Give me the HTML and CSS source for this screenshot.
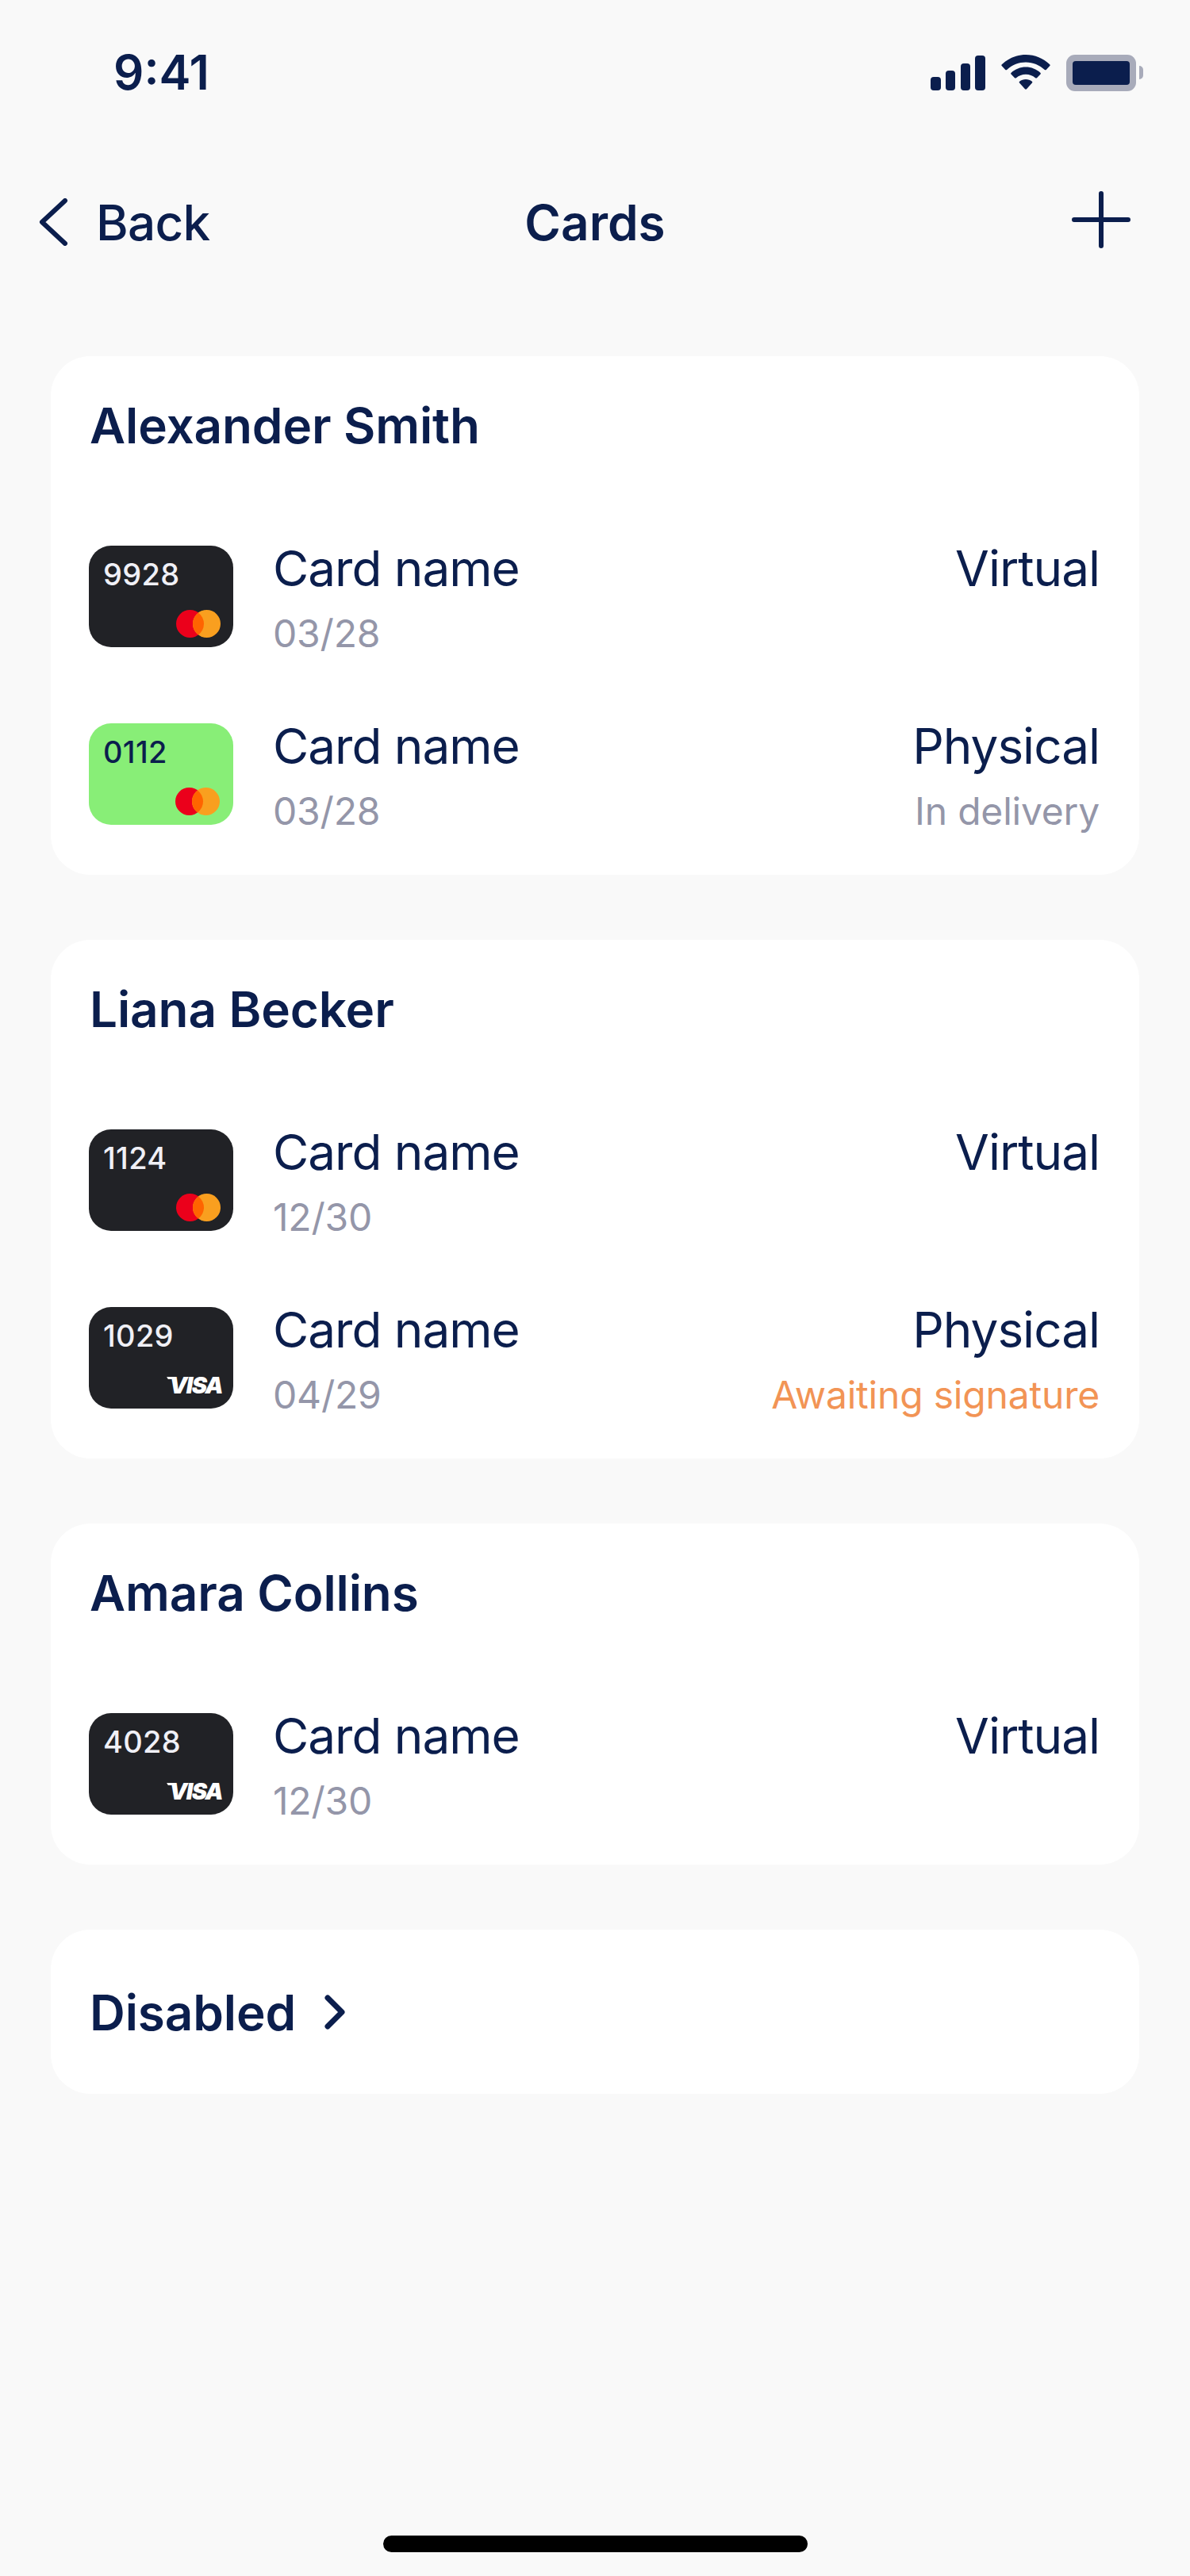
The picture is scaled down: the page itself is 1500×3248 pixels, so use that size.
FILE: index.html
```html
<!DOCTYPE html>
<html>

<head>
    <title>Cards</title>
    <link rel="stylesheet" href="styles.css">
</head>

<body>

    <div class="page">
        <div class="status-bar">
            <span class="time">9:41</span>
            <div class="status-icons">
                <svg class="icon-signal" width="69" height="44" viewBox="0 0 69 44">
                    <rect x="0" y="27" width="13" height="17" rx="4" />
                    <rect x="19" y="19" width="12" height="25" rx="4" />
                    <rect x="38" y="10" width="12" height="34" rx="4" />
                    <rect x="56" y="0" width="13" height="44" rx="4" />
                </svg>
                <svg class="icon-wifi" width="62" height="44" viewBox="0 0 62 44">
                    <path d="M31 0C19.500 0 9 4.600 0.800 12.200C0.200 12.800 0.200 13.600 0.700 14.100L5.300 18.900C5.800 19.400 6.600 19.400 7.200 18.900C13.500 13 21.800 9.400 31 9.400C40.200 9.400 48.500 13 54.800 18.900C55.400 19.400 56.200 19.400 56.700 18.900L61.300 14.100C61.800 13.600 61.800 12.800 61.200 12.200C53 4.600 42.500 0 31 0Z" />
                    <path d="M31 15.500C24 15.500 17.600 18.200 12.600 22.700C12 23.200 12 24 12.500 24.500L17 29.200C17.500 29.700 18.300 29.700 18.900 29.200C22.200 26.400 26.400 24.800 31 24.800C35.600 24.800 39.800 26.400 43.100 29.200C43.700 29.700 44.500 29.700 45 29.200L49.500 24.500C50 24 50 23.200 49.400 22.700C44.400 18.200 38 15.500 31 15.500Z" />
                    <path d="M31 31C28 31 25.300 32 23.100 33.800C22.500 34.300 22.500 35 23 35.500L30 43.300C30.500 43.900 31.500 43.900 32 43.300L39 35.500C39.500 35 39.500 34.300 38.900 33.800C36.700 32 34 31 31 31Z" />
                </svg>
                <div class="battery">
                    <div class="battery-fill"></div>
                </div>
            </div>
        </div>

        <div class="nav">
            <div class="nav-side">
                <svg class="icon-back" width="38" height="60" viewBox="0 0 38 60">
                    <path d="M34 3L5 30L34 57" />
                </svg>
                <span class="back-label">Back</span>
            </div>
            <h1 class="nav-title">Cards</h1>
            <div class="nav-side nav-side-right">
                <svg class="icon-plus" width="74" height="72" viewBox="0 0 74 72">
                    <path d="M37 3V69M3 36H71" />
                </svg>
            </div>
        </div>

        <div class="groups">
            <div class="group">
                <h2 class="owner">Alexander Smith</h2>
                <div class="rows">
                    <div class="row">
                        <div class="mini-card">
                            <span class="mini-number">9928</span>
                            <svg class="mastercard" width="56" height="35" viewBox="0 0 56 35">
                                <circle cx="17.500" cy="17.500" r="17.500" fill="#eb001b" />
                                <circle cx="38.500" cy="17.500" r="17.500" fill="#f99f1f" />
                                <path d="M28 3.500A17.500 17.500 0 0 1 28 31.500A17.500 17.500 0 0 1 28 3.500Z" fill="#ff6400" />
                            </svg>
                        </div>
                        <div class="info">
                            <div class="title">Card name</div>
                            <div class="sub">03/28</div>
                        </div>
                        <div class="info info-right">
                            <div class="title">Virtual</div>
                        </div>
                    </div>
                    <div class="row">
                        <div class="mini-card mini-card-green">
                            <span class="mini-number">0112</span>
                            <svg class="mastercard" width="56" height="35" viewBox="0 0 56 35">
                                <circle cx="17.500" cy="17.500" r="17.500" fill="#eb001b" />
                                <circle cx="38.500" cy="17.500" r="17.500" fill="#f99f1f" />
                                <path d="M28 3.500A17.500 17.500 0 0 1 28 31.500A17.500 17.500 0 0 1 28 3.500Z" fill="#ff6400" />
                            </svg>
                        </div>
                        <div class="info">
                            <div class="title">Card name</div>
                            <div class="sub">03/28</div>
                        </div>
                        <div class="info info-right">
                            <div class="title">Physical</div>
                            <div class="sub">In delivery</div>
                        </div>
                    </div>
                </div>
            </div>

            <div class="group">
                <h2 class="owner">Liana Becker</h2>
                <div class="rows">
                    <div class="row">
                        <div class="mini-card">
                            <span class="mini-number">1124</span>
                            <svg class="mastercard" width="56" height="35" viewBox="0 0 56 35">
                                <circle cx="17.500" cy="17.500" r="17.500" fill="#eb001b" />
                                <circle cx="38.500" cy="17.500" r="17.500" fill="#f99f1f" />
                                <path d="M28 3.500A17.500 17.500 0 0 1 28 31.500A17.500 17.500 0 0 1 28 3.500Z" fill="#ff6400" />
                            </svg>
                        </div>
                        <div class="info">
                            <div class="title">Card name</div>
                            <div class="sub">12/30</div>
                        </div>
                        <div class="info info-right">
                            <div class="title">Virtual</div>
                        </div>
                    </div>
                    <div class="row">
                        <div class="mini-card">
                            <span class="mini-number">1029</span>
                            <div class="visa">VISA</div>
                        </div>
                        <div class="info">
                            <div class="title">Card name</div>
                            <div class="sub">04/29</div>
                        </div>
                        <div class="info info-right">
                            <div class="title">Physical</div>
                            <div class="sub sub-warning">Awaiting signature</div>
                        </div>
                    </div>
                </div>
            </div>

            <div class="group">
                <h2 class="owner">Amara Collins</h2>
                <div class="rows">
                    <div class="row">
                        <div class="mini-card">
                            <span class="mini-number">4028</span>
                            <div class="visa">VISA</div>
                        </div>
                        <div class="info">
                            <div class="title">Card name</div>
                            <div class="sub">12/30</div>
                        </div>
                        <div class="info info-right">
                            <div class="title">Virtual</div>
                        </div>
                    </div>
                </div>
            </div>

            <div class="group group-link">
                <span class="owner">Disabled</span>
                <svg class="icon-chevron" width="26" height="44" viewBox="0 0 26 44">
                    <path d="M4 4L22 22L4 40" />
                </svg>
            </div>
        </div>

        <div class="home-indicator"></div>
    </div>

</body>

</html>
```

FILE: styles.css
```css
* {
    box-sizing: border-box;
}

body {
    font-family: Inter, "Liberation Sans", sans-serif;
    background: #f9f9f9;
    color: #0b1e4d;
    margin: 0;
}

.page {
    display: flex;
    flex-direction: column;
    height: 3248px;
}

/* status bar */
.status-bar {
    display: flex;
    justify-content: space-between;
    align-items: flex-start;
    height: 241px;
    padding: 69px 68px 0 143px;
}

.time {
    font-size: 60px;
    font-weight: 600;
    line-height: 44px;
}

.status-icons {
    display: flex;
    align-items: flex-start;
    gap: 20px;
}

.status-icons svg {
    fill: #0b1e4d;
    display: block;
}

.icon-signal {
    margin-top: 1px;
}

.battery {
    position: relative;
    width: 88px;
    height: 46px;
    padding: 8px;
    background: #a8abba;
    border-radius: 11px;
}

.battery::after {
    content: "";
    position: absolute;
    left: 92px;
    top: 14px;
    width: 5px;
    height: 17px;
    background: #a8abba;
    border-radius: 0 5px 5px 0;
}

.battery-fill {
    height: 30px;
    background: #0b1e4d;
    border-radius: 4px;
}

/* nav */
.nav {
    display: flex;
    align-items: flex-start;
    height: 208px;
    padding: 0 48px;
}

.nav-side {
    flex: 1;
    display: flex;
    align-items: flex-start;
    gap: 35px;
}

.nav-side-right {
    justify-content: flex-end;
}

.icon-back {
    margin-top: 9px;
    fill: none;
    stroke: #0b1e4d;
    stroke-width: 6;
    stroke-linecap: round;
    stroke-linejoin: round;
}

.icon-plus {
    margin-right: 27px;
    fill: none;
    stroke: #0b1e4d;
    stroke-width: 6;
    stroke-linecap: round;
}

.back-label,
.nav-title {
    font-size: 62px;
    line-height: 76px;
    margin: 2px 0 0;
}

.back-label {
    font-weight: 500;
    letter-spacing: -0.7px;
}

.nav-title {
    font-weight: 600;
}

/* groups */
.groups {
    display: flex;
    flex-direction: column;
    gap: 82px;
    padding: 0 64px;
}

.group {
    background: #fff;
    border-radius: 50px;
    padding: 50px 50px 63px 48px;
}

.owner {
    display: block;
    font-size: 62px;
    font-weight: 600;
    line-height: 76px;
    letter-spacing: -0.1px;
    margin: 0;
    padding-left: 1px;
}

.rows {
    display: flex;
    flex-direction: column;
    gap: 96px;
    margin-top: 113px;
}

.row {
    display: flex;
    align-items: flex-start;
    height: 128px;
}

.group-link {
    display: flex;
    align-items: center;
    gap: 36px;
    height: 207px;
    padding: 2px 48px 0;
}

.icon-chevron {
    margin-top: -2px;
    fill: none;
    stroke: #0b1e4d;
    stroke-width: 7;
    stroke-linecap: round;
    stroke-linejoin: round;
}

/* little card picture */
.mini-card {
    display: flex;
    flex-direction: column;
    justify-content: space-between;
    flex-shrink: 0;
    width: 182px;
    height: 128px;
    margin-right: 50px;
    padding: 13px 16px 12px 18px;
    background: #212226;
    color: #f0f0f6;
    border-radius: 28px;
}

.mini-card-green {
    background: #88ee77;
    color: #0b1e4d;
}

.mini-number {
    font-size: 38px;
    font-weight: 500;
    line-height: 46px;
    letter-spacing: 0.3px;
}

.mastercard {
    display: block;
    align-self: flex-end;
}

.mini-card-green .mastercard {
    margin-right: 1px;
}

.visa {
    font-size: 29px;
    font-weight: 900;
    font-style: italic;
    line-height: 24px;
    letter-spacing: -1.6px;
    text-align: right;
    color: #fff;
    margin-right: -2px;
    margin-bottom: 5px;
}

/* the little flag on the left of the V */
.visa::before {
    content: "";
    display: inline-block;
    width: 7px;
    height: 3px;
    margin-right: -5px;
    vertical-align: 18px;
    background: #fff;
    transform: skewX(30deg);
}

/* row text */
.info {
    margin-top: -1px;
}

.info-right {
    margin-left: auto;
    text-align: right;
}

.title {
    font-size: 62px;
    line-height: 60px;
    letter-spacing: -1px;
}

.sub {
    font-size: 48px;
    line-height: 60px;
    margin-top: 22px;
    letter-spacing: -0.2px;
    color: #9496a9;
}

.sub-warning {
    color: #f29455;
}

.home-indicator {
    width: 535px;
    height: 21px;
    margin: auto auto 30px;
    background: #000;
    border-radius: 11px;
}
```
